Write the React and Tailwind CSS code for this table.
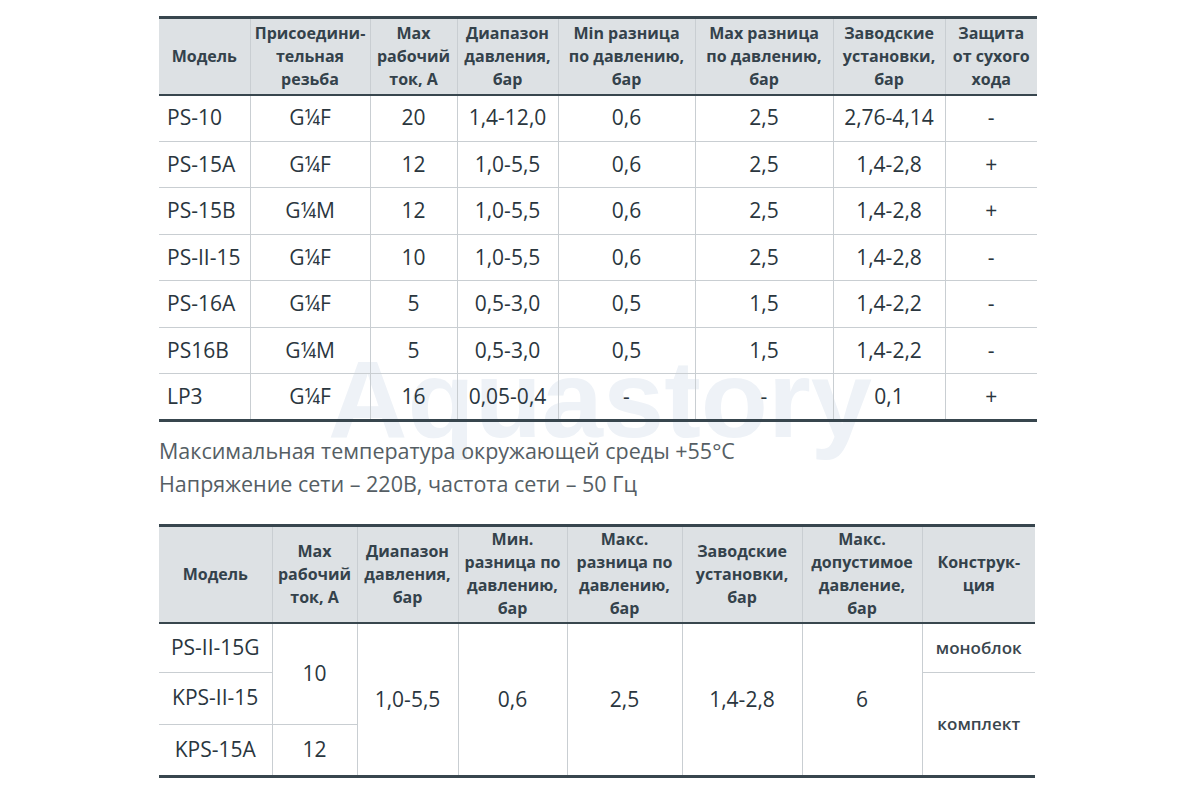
import React from "react";

const font = { fontFamily: '"Open Sans", "Noto Sans", sans-serif' };

const cols1 = [91, 120, 87, 101, 137, 138, 112, 92];
const cols2 = [113, 85, 101, 109, 115, 120, 120, 113];

const head1 = [
    ["Модель"],
    ["Присоедини-", "тельная", "резьба"],
    ["Max", "рабочий", "ток, А"],
    ["Диапазон", "давления,", "бар"],
    ["Min разница", "по давлению,", "бар"],
    ["Max разница", "по давлению,", "бар"],
    ["Заводские", "установки,", "бар"],
    ["Защита", "от сухого", "хода"],
];

const rows1 = [
    ["PS-10", "G¼F", "20", "1,4-12,0", "0,6", "2,5", "2,76-4,14", "-"],
    ["PS-15A", "G¼F", "12", "1,0-5,5", "0,6", "2,5", "1,4-2,8", "+"],
    ["PS-15B", "G¼M", "12", "1,0-5,5", "0,6", "2,5", "1,4-2,8", "+"],
    ["PS-II-15", "G¼F", "10", "1,0-5,5", "0,6", "2,5", "1,4-2,8", "-"],
    ["PS-16A", "G¼F", "5", "0,5-3,0", "0,5", "1,5", "1,4-2,2", "-"],
    ["PS16B", "G¼M", "5", "0,5-3,0", "0,5", "1,5", "1,4-2,2", "-"],
    ["LP3", "G¼F", "16", "0,05-0,4", "-", "-", "0,1", "+"],
];

const head2 = [
    ["Модель"],
    ["Max", "рабочий", "ток, А"],
    ["Диапазон", "давления,", "бар"],
    ["Мин.", "разница по", "давлению,", "бар"],
    ["Макс.", "разница по", "давлению,", "бар"],
    ["Заводские", "установки,", "бар"],
    ["Макс.", "допустимое", "давление,", "бар"],
    ["Конструк-", "ция"],
];

const line = "border-[#c9ced2]";

function HeadCell({ lines, first }) {
    return (
        <th
            className={`align-middle text-center font-bold text-[16px] leading-[23px] text-[#34424b] whitespace-nowrap px-0 ${
                first ? "" : `border-l ${line}`
            }`}
        >
            {lines.map((l, i) => (
                <div key={i}>{l}</div>
            ))}
        </th>
    );
}

// left=true only for the model column of the first table
function Cell({ children, left, edge, className = "", ...rest }) {
    return (
        <td
            className={`align-middle text-[21px] text-[#2a363e] whitespace-nowrap ${
                left ? "text-left pl-2" : "text-center"
            } ${edge ? "" : `border-l ${line}`} ${className}`}
            {...rest}
        >
            {children}
        </td>
    );
}

function SpecTable() {
    return (
        <table className="table-fixed border-collapse w-[878px]">
            <colgroup>
                {cols1.map((w, i) => (
                    <col key={i} style={{ width: w }} />
                ))}
            </colgroup>
            <thead>
                <tr className="h-[77px] bg-[#dde1e4] border-t-[3px] border-b-2 border-[#38464e]">
                    {head1.map((h, i) => (
                        <HeadCell key={i} lines={h} first={i === 0} />
                    ))}
                </tr>
            </thead>
            <tbody>
                {rows1.map((r, ri) => (
                    <tr
                        key={ri}
                        className={`h-[46.5px] ${
                            ri === rows1.length - 1 ? "border-b-[3px] border-[#38464e]" : `border-b ${line}`
                        }`}
                    >
                        {r.map((c, ci) => (
                            <Cell key={ci} left={ci === 0} edge={ci === 0}>
                                {c}
                            </Cell>
                        ))}
                    </tr>
                ))}
            </tbody>
        </table>
    );
}

function KitTable() {
    const kind = `border-l ${line} text-center align-middle font-semibold text-[17px] text-[#3a464e]`;
    return (
        <table className="table-fixed border-collapse w-[876px]">
            <colgroup>
                {cols2.map((w, i) => (
                    <col key={i} style={{ width: w }} />
                ))}
            </colgroup>
            <thead>
                <tr className="h-[98px] bg-[#dde1e4] border-t-[3px] border-b-2 border-[#38464e]">
                    {head2.map((h, i) => (
                        <HeadCell key={i} lines={h} first={i === 0} />
                    ))}
                </tr>
            </thead>
            <tbody>
                <tr className={`h-[49px] border-b ${line}`}>
                    <Cell edge>PS-II-15G</Cell>
                    <Cell rowSpan={2} className={`border-b ${line}`}>
                        10
                    </Cell>
                    <Cell rowSpan={3}>1,0-5,5</Cell>
                    <Cell rowSpan={3}>0,6</Cell>
                    <Cell rowSpan={3}>2,5</Cell>
                    <Cell rowSpan={3}>1,4-2,8</Cell>
                    <Cell rowSpan={3}>6</Cell>
                    <td className={`${kind} border-b`}>моноблок</td>
                </tr>
                <tr className={`h-[52px] border-b ${line}`}>
                    <Cell edge>KPS-II-15</Cell>
                    <td rowSpan={2} className={kind}>
                        комплект
                    </td>
                </tr>
                <tr className="h-[52px] border-b-[3px] border-[#38464e]">
                    <Cell edge>KPS-15A</Cell>
                    <Cell>12</Cell>
                </tr>
            </tbody>
        </table>
    );
}

export default function App() {
    return (
        <div className="relative w-[1200px] h-[800px] bg-white overflow-hidden" style={font}>
            <div
                className="absolute left-[328px] top-[344px] text-[110px] font-bold leading-none text-[#eef2f7] select-none pointer-events-none"
                style={{ fontFamily: '"Liberation Sans", Arial, sans-serif' }}
            >
                Aquastory
            </div>
            <div className="relative pl-[159px] pt-[16px]">
                <SpecTable />
                <div className="mt-[12px] text-[21.5px] leading-[33px] text-[#555e64]">
                    <div>Максимальная температура окружающей среды +55°С</div>
                    <div>Напряжение сети – 220В, частота сети – 50 Гц</div>
                </div>
                <div className="mt-[24px]">
                    <KitTable />
                </div>
            </div>
        </div>
    );
}
